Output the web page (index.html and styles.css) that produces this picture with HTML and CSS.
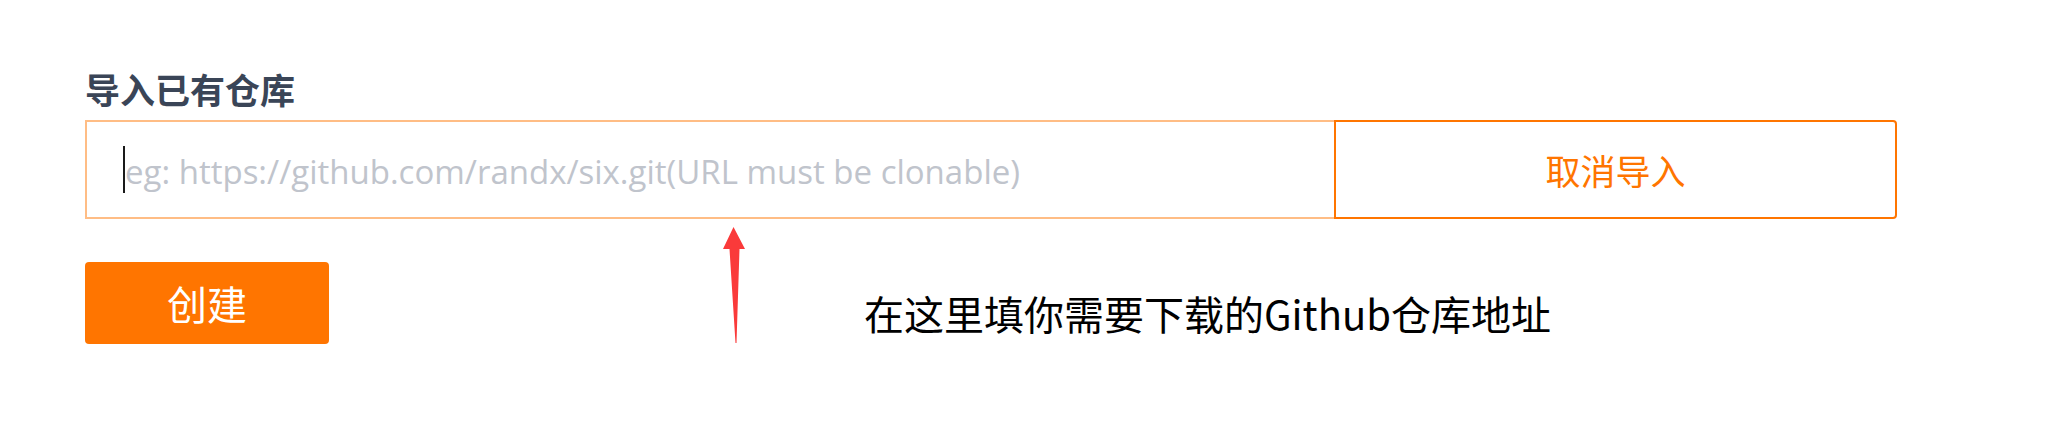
FILE: index.html
```html
<!DOCTYPE html>
<html lang="zh-CN">
<head>
<meta charset="utf-8">
<title>导入已有仓库</title>
<link rel="stylesheet" href="styles.css">
</head>
<body>
<main class="page">
  <h2 class="label">导入已有仓库</h2>
  <div class="input-group">
    <div class="input">
      <span class="caret"></span><span class="placeholder">eg: https://github.com/randx/six.git(URL must be clonable)</span>
    </div>
    <button class="btn-cancel" type="button">取消导入</button>
  </div>
  <div class="actions">
    <button class="btn-create" type="button">创建</button>
    <p class="hint">在这里填你需要下载的Github仓库地址</p>
  </div>
  <svg class="arrow" width="30" height="122" viewBox="0 0 30 122" aria-hidden="true">
    <polygon points="13.5,2 25,24 19.5,24 16.5,118 15.5,118 9.5,24 3,24" fill="#fa3a3a"/>
  </svg>
</main>
</body>
</html>
```
FILE: styles.css
```css
* { box-sizing: border-box; }

html, body {
  margin: 0;
  padding: 0;
  background: #ffffff;
}

body {
  font-family: "Noto Sans CJK SC", "Noto Sans", sans-serif;
}

.page {
  position: relative;
  padding: 71px 0 0 85px;
  width: 2055px;
  height: 421px;
}

.label {
  margin: 0 0 13px;
  font-size: 35px;
  line-height: 36px;
  font-weight: 700;
  color: #3a4557;
}

.input-group {
  display: flex;
  height: 99px;
  width: 1812px;
}

.input {
  display: flex;
  align-items: center;
  width: 1249px;
  height: 100%;
  border: 2px solid #ffbd85;
  border-right: none;
  padding-left: 36px;
}

.caret {
  display: inline-block;
  width: 2px;
  height: 47px;
  background: #1a1a1a;
}

.placeholder {
  font-family: "Open Sans", "Noto Sans", sans-serif;
  font-size: 33px;
  line-height: 1;
  padding-top: 3px;
  color: #c0c4cc;
  white-space: nowrap;
}

.btn-cancel {
  width: 563px;
  height: 100%;
  border: 2px solid #ff7500;
  border-radius: 0 4px 4px 0;
  background: #ffffff;
  color: #ff7500;
  font-family: "Noto Sans CJK SC", sans-serif;
  font-size: 35px;
  padding: 0;
  cursor: pointer;
}

.actions {
  display: flex;
  align-items: center;
  margin-top: 43px;
}

.btn-create {
  width: 244px;
  height: 82px;
  border: none;
  border-radius: 4px;
  background: #ff7500;
  color: #ffffff;
  font-family: "Noto Sans CJK SC", sans-serif;
  font-size: 40px;
  padding: 0;
  cursor: pointer;
}

.hint {
  margin: 20px 0 0 535px;
  font-size: 40px;
  line-height: 1;
  color: #000000;
}

.arrow {
  position: absolute;
  left: 720px;
  top: 225px;
}
```
